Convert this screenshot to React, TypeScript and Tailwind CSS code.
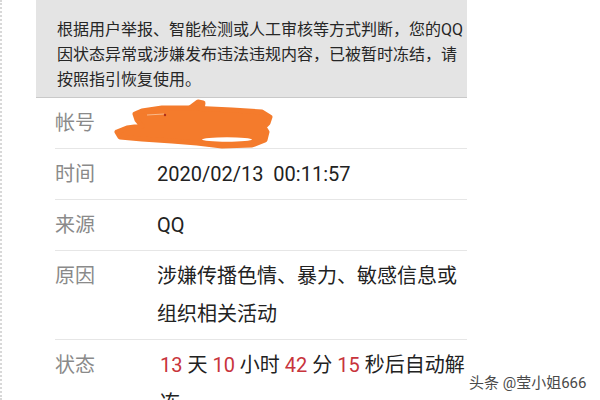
export default function App() {
  const rows = [
    { label: "时间", value: <span className="font-['Roboto','Noto_Sans_CJK_SC',sans-serif]">2020/02/13&nbsp;&nbsp;00:11:57</span> },
    { label: "来源", value: <span className="font-['Roboto','Noto_Sans_CJK_SC',sans-serif]">QQ</span> },
    { label: "原因", value: <>涉嫌传播色情、暴力、敏感信息或<br />组织相关活动</> },
  ];

  const red = "text-[#c8343c] font-['Roboto','Noto_Sans_CJK_SC',sans-serif]";

  return (
    <div className="relative w-[600px] h-[400px] overflow-hidden bg-white border-l-2 border-dotted border-[#d8d8d8] font-['Roboto','Noto_Sans_CJK_SC',sans-serif]">
      <div className="ml-[34px] w-[431px]">
        {/* notice banner */}
        <div className="h-[98px] bg-[#e4e4e4] border-b border-[#c9c9c9] pl-[21px] pt-[17px] text-[16px] leading-[25px] text-[#262626]">
          根据用户举报、智能检测或人工审核等方式判断，您的QQ
          <br />
          因状态异常或涉嫌发布违法违规内容，已被暂时冻结，请
          <br />
          按照指引恢复使用。
        </div>

        {/* account row */}
        <div className="relative ml-[19px] flex py-[6px] border-b border-[#e6e6e6] text-[20px] leading-[38px]">
          <div className="w-[102px] text-[#8a8a8a]">帐号</div>
          <div className="text-[#222]">&nbsp;</div>
          <svg className="absolute left-[47px] top-[-8px]" width="200" height="60" viewBox="0 0 200 60">
            <g fill="#f47b2c" stroke="#f47b2c" strokeWidth="5" strokeLinejoin="round" strokeLinecap="round">
              <path d="M88 18 L96 12 L101 13 L100 19 Z" />
              <path d="M40 21 L60 18 L88 18 L130 20 L160 22 L168 27 L166 33 L162 37 L165 42 L163 50 L150 55 L120 56 L95 53 L70 51 L40 49 L18 47 L15 42 L25 38 L40 36 L35 30 L33 24 Z" />
            </g>
            <ellipse cx="125" cy="49.5" rx="25" ry="2.2" fill="#ffffff" />
            <path d="M45 25 L62 24" stroke="#f9b98a" strokeWidth="1" />
            <circle cx="63" cy="25" r="1.2" fill="#b0301c" />
          </svg>
        </div>

        {rows.map((r) => (
          <div key={r.label} className="ml-[19px] flex py-[6px] border-b border-[#e6e6e6] text-[20px] leading-[38px]">
            <div className="w-[102px] shrink-0 text-[#8a8a8a]">{r.label}</div>
            <div className="text-[#222]">{r.value}</div>
          </div>
        ))}

        {/* status row */}
        <div className="ml-[19px] flex py-[6px] text-[20px] leading-[38px]">
          <div className="w-[102px] shrink-0 text-[#8a8a8a]">状态</div>
          <div className="w-[312px] shrink-0 pl-[3px] text-[#222]">
            <span className={red}>13</span> 天 <span className={red}>10</span> 小时 <span className={red}>42</span> 分 <span className={red}>15</span> 秒后自动解冻
          </div>
        </div>
      </div>

      {/* watermark */}
      <div className="absolute left-[467px] top-[373px] text-[15px] leading-[20px] text-[#4a4a4a] [text-shadow:0_0_2px_#fff,0_0_2px_#fff]">
        头条 @莹小姐666
      </div>
    </div>
  );
}
